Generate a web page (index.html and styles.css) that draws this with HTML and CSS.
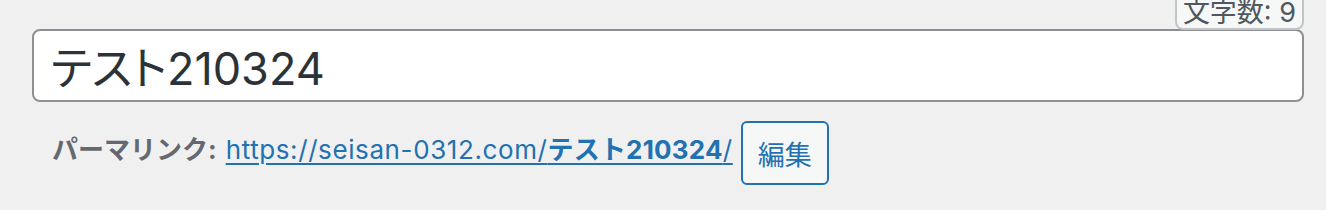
FILE: index.html
```html
<!DOCTYPE html>
<html lang="ja">
<head>
    <meta charset="UTF-8">
    <title>タイトル</title>
    <link rel="stylesheet" href="styles.css">
</head>
<body>
    <div class="titlediv">
        <div class="titlewrap">
            <div class="char-count">文字数: 9</div>
            <input type="text" class="title-input" value="テスト210324">
        </div>
        <div class="permalink">
            <strong class="permalink-label">パーマリンク:</strong>
            <a class="permalink-url" href="#">https://seisan-0312.com/<span class="slug">テスト210324</span>/</a>
            <button class="edit-slug">編集</button>
        </div>
    </div>
</body>
</html>
```
FILE: styles.css
```css
body {
    margin: 0;
    background: #f0f0f1;
    font-family: "Inter", "Noto Sans CJK JP", sans-serif;
    color: #3c434a;
}
.titlediv {
    padding: 29px 22px 0 32px;
}
.titlewrap {
    position: relative;
}
.char-count {
    position: absolute;
    right: 0;
    bottom: 100%;
    margin-bottom: -1px;
    min-width: 124px;
    box-sizing: border-box;
    padding: 0 6px 1px;
    text-align: right;
    white-space: nowrap;
    font-size: 27px;
    line-height: 29px;
    color: #50575e;
    background: #f6f7f7;
    border: 2px solid #c3c4c7;
    border-top: none;
    border-radius: 0 0 8px 8px;
}
.title-input {
    display: block;
    width: 100%;
    box-sizing: border-box;
    height: 73px;
    margin: 0;
    padding: 0 17px;
    font-family: inherit;
    font-feature-settings: "palt";
    font-size: 45px;
    color: #2c3338;
    background: #fff;
    border: 2px solid #8c8f94;
    border-radius: 8px;
    outline: none;
}
.permalink {
    display: flex;
    align-items: center;
    margin-top: 19px;
    padding-left: 20px;
    font-size: 26px;
    line-height: 1;
}
.permalink-label {
    color: #646970;
    margin-right: 9px;
    margin-top: -6px;
}
.permalink-url {
    color: #2271b1;
    text-decoration: underline;
    text-underline-offset: 4px;
    letter-spacing: 0.6px;
    margin-top: -6px;
}
.slug {
    font-weight: bold;
    letter-spacing: 0.2px;
}
.edit-slug {
    margin-left: 8px;
    width: 88px;
    height: 64px;
    padding: 0;
    font-family: inherit;
    font-size: 27px;
    color: #2271b1;
    background: #f6f7f7;
    border: 2px solid #2271b1;
    border-radius: 6px;
}
```
